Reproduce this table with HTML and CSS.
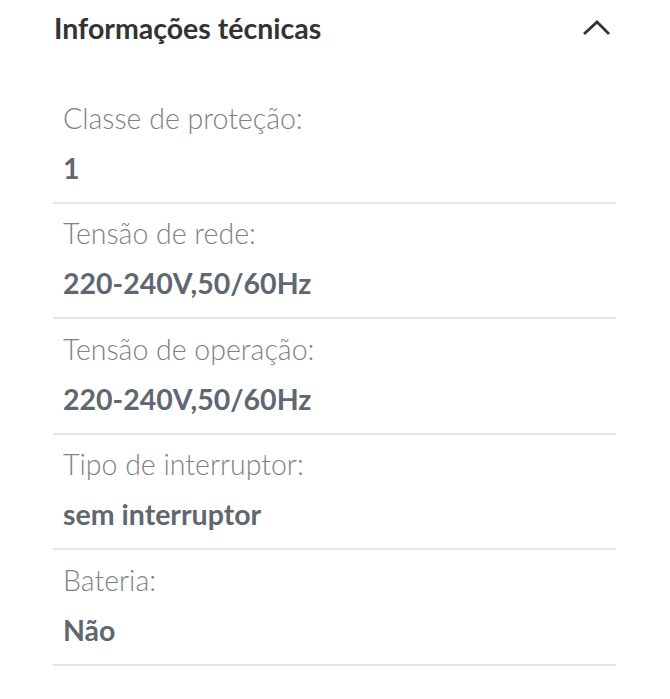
FILE: index.html
```html
<!DOCTYPE html>
<html lang="pt">
<head>
<meta charset="utf-8">
<link rel="stylesheet" href="styles.css">
</head>
<body>
<section class="panel">
  <header class="panel-head">
    <h2 class="panel-title">Informações técnicas</h2>
    <svg class="chevron" width="30" height="18" viewBox="0 0 30 18">
      <polyline points="2,15 15,3 27,15" fill="none" stroke="#333" stroke-width="2.8" stroke-linecap="butt" stroke-linejoin="miter"/>
    </svg>
  </header>
  <dl class="specs">
    <div class="spec">
      <dt class="spec-label">Classe de proteção:</dt>
      <dd class="spec-value">1</dd>
    </div>
    <div class="spec">
      <dt class="spec-label">Tensão de rede:</dt>
      <dd class="spec-value">220-240V,50/60Hz</dd>
    </div>
    <div class="spec">
      <dt class="spec-label">Tensão de operação:</dt>
      <dd class="spec-value">220-240V,50/60Hz</dd>
    </div>
    <div class="spec">
      <dt class="spec-label">Tipo de interruptor:</dt>
      <dd class="spec-value">sem interruptor</dd>
    </div>
    <div class="spec">
      <dt class="spec-label">Bateria:</dt>
      <dd class="spec-value">Não</dd>
    </div>
  </dl>
</section>
</body>
</html>
```

FILE: styles.css
```css
html, body {
  margin: 0;
  padding: 0;
  background: #fff;
}
body {
  font-family: Lato, "Noto Sans", sans-serif;
  width: 670px;
}
.panel {
  padding: 0 54px 0 53px;
}
.panel-head {
  display: flex;
  align-items: flex-start;
  justify-content: space-between;
  height: 88.5px;
  padding-left: 1px;
  box-sizing: border-box;
}
.panel-title {
  margin: 9.7px 0 0;
  font-size: 28.5px;
  line-height: 36px;
  font-weight: 700;
  color: #333;
}
.chevron {
  margin-top: 19px;
  margin-right: 4px;
}
.specs {
  margin: 0;
  padding: 0;
}
.spec {
  padding: 11.4px 0 17.1px 10px;
  border-bottom: 2px solid #e4e5e6;
}
.spec-label {
  font-size: 28.5px;
  line-height: 36px;
  font-weight: 300;
  color: #7d8287;
}
.spec-value {
  margin: 15px 0 0;
  font-size: 28.5px;
  line-height: 34px;
  font-weight: 700;
  color: #5f6770;
}
```
